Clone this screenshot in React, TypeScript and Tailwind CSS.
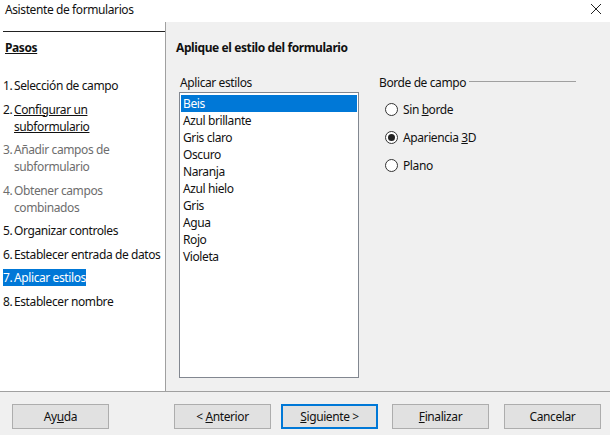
import React from "react";

const steps: { n: string; lines: string[]; state: "normal" | "link" | "disabled" | "active" }[] = [
  { n: "1.", lines: ["Selección de campo"], state: "normal" },
  { n: "2.", lines: ["Configurar un ", "subformulario"], state: "link" },
  { n: "3.", lines: ["Añadir campos de", "subformulario"], state: "disabled" },
  { n: "4.", lines: ["Obtener campos", "combinados"], state: "disabled" },
  { n: "5.", lines: ["Organizar controles"], state: "normal" },
  { n: "6.", lines: ["Establecer entrada de datos"], state: "normal" },
  { n: "7.", lines: ["Aplicar estilos"], state: "active" },
  { n: "8.", lines: ["Establecer nombre"], state: "normal" },
];

const styles = ["Beis", "Azul brillante", "Gris claro", "Oscuro", "Naranja", "Azul hielo", "Gris", "Agua", "Rojo", "Violeta"];

function Radio({ checked, children }: { checked?: boolean; children: React.ReactNode }) {
  return (
    <div className="flex items-center h-[17px]">
      <span className="w-[13px] h-[13px] rounded-full border border-[#333] bg-white flex items-center justify-center mr-[5px]">
        {checked && <span className="w-[7px] h-[7px] rounded-full bg-[#222]" />}
      </span>
      <span>{children}</span>
    </div>
  );
}

function Btn({ children, def }: { children: React.ReactNode; def?: boolean }) {
  return (
    <div
      className={
        "w-[97px] h-[25px] flex items-center justify-center bg-[#e1e1e1] text-[#111] " +
        (def ? "border-2 border-[#0078d7]" : "border border-[#adadad]")
      }
    >
      <span>{children}</span>
    </div>
  );
}

export default function App() {
  return (
    <div className="w-[610px] h-[435px] bg-white flex flex-col text-[12px] tracking-[-0.4px] text-[#111] font-['Segoe_UI','Noto_Sans',sans-serif] leading-[17px]">
      <div className="h-[22px] flex items-start justify-between pl-[5px] pr-[8px] pt-[1px]">
        <span className="text-[12px]">Asistente de formularios</span>
        <svg width="12" height="12" viewBox="0 0 12 12" className="mt-[2px]">
          <path d="M1 1 L11 11 M11 1 L1 11" stroke="#222" strokeWidth="1" />
        </svg>
      </div>
      <div className="flex h-[369px]">
        <div className="w-[166px] bg-white border-r border-[#a0a0a0] pt-[9px]">
          <div className="ml-[3px] border-t border-[#222]" />
          <div className="pl-[5px] mt-[7px] font-bold underline">Pasos</div>
          <div className="mt-[21px] flex flex-col gap-[6.5px]">
            {steps.map((s) => (
              <div key={s.n} className="pl-[3px]">
                <div
                  className={
                    "inline-flex " +
                    (s.state === "active" ? "bg-[#0078d7] text-white" : s.state === "disabled" ? "text-[#6d6d6d]" : "")
                  }
                >
                  <span className="w-[11px] shrink-0">{s.n}</span>
                  <span className="flex flex-col">
                    {s.lines.map((l, i) => (
                      <span key={i} className={s.state === "link" ? "underline" : ""}>
                        {l}
                      </span>
                    ))}
                  </span>
                </div>
              </div>
            ))}
          </div>
        </div>
        <div className="flex-1 bg-[#f0f0f0] pl-[10px] pt-[17px]">
          <div className="font-bold">Aplique el estilo del formulario</div>
          <div className="flex mt-[18px]">
            <div className="ml-[3px] w-[180px]">
              <div className="h-[17px] ml-[1px]">Aplicar estilos</div>
              <div className="mt-[1px] w-[180px] h-[286px] bg-white border border-[#828790] p-[1px] pt-[2px]">
                {styles.map((s, i) => (
                  <div key={s} className={"h-[17px] pl-[2px] " + (i === 0 ? "bg-[#0078d7] text-white" : "")}>
                    {s}
                  </div>
                ))}
              </div>
            </div>
            <div className="ml-[20px] w-[197px]">
              <div className="flex items-center h-[17px]">
                <span>Borde de campo</span>
                <span className="flex-1 ml-[3px] border-t border-[#a0a0a0] mt-[-2px]" />
              </div>
              <div className="mt-[10px] ml-[6px] flex flex-col gap-[11px]">
                <Radio>
                  Sin <span className="underline">b</span>orde
                </Radio>
                <Radio checked>
                  Apariencia <span className="underline">3</span>D
                </Radio>
                <Radio>Plano</Radio>
              </div>
            </div>
          </div>
        </div>
      </div>
      <div className="flex-1 bg-[#f0f0f0] border-t border-[#a0a0a0] flex items-start pt-[12px] pl-[12px]">
        <Btn>
          Ay<span className="underline">u</span>da
        </Btn>
        <div className="ml-[65px]">
          <Btn>
            {"< "}
            <span className="underline">A</span>nterior
          </Btn>
        </div>
        <div className="ml-[10px]">
          <Btn def>
            <span className="underline">S</span>iguiente &gt;
          </Btn>
        </div>
        <div className="ml-[14px]">
          <Btn>
            <span className="underline">F</span>inalizar
          </Btn>
        </div>
        <div className="ml-[15px]">
          <Btn>Cancelar</Btn>
        </div>
      </div>
    </div>
  );
}
